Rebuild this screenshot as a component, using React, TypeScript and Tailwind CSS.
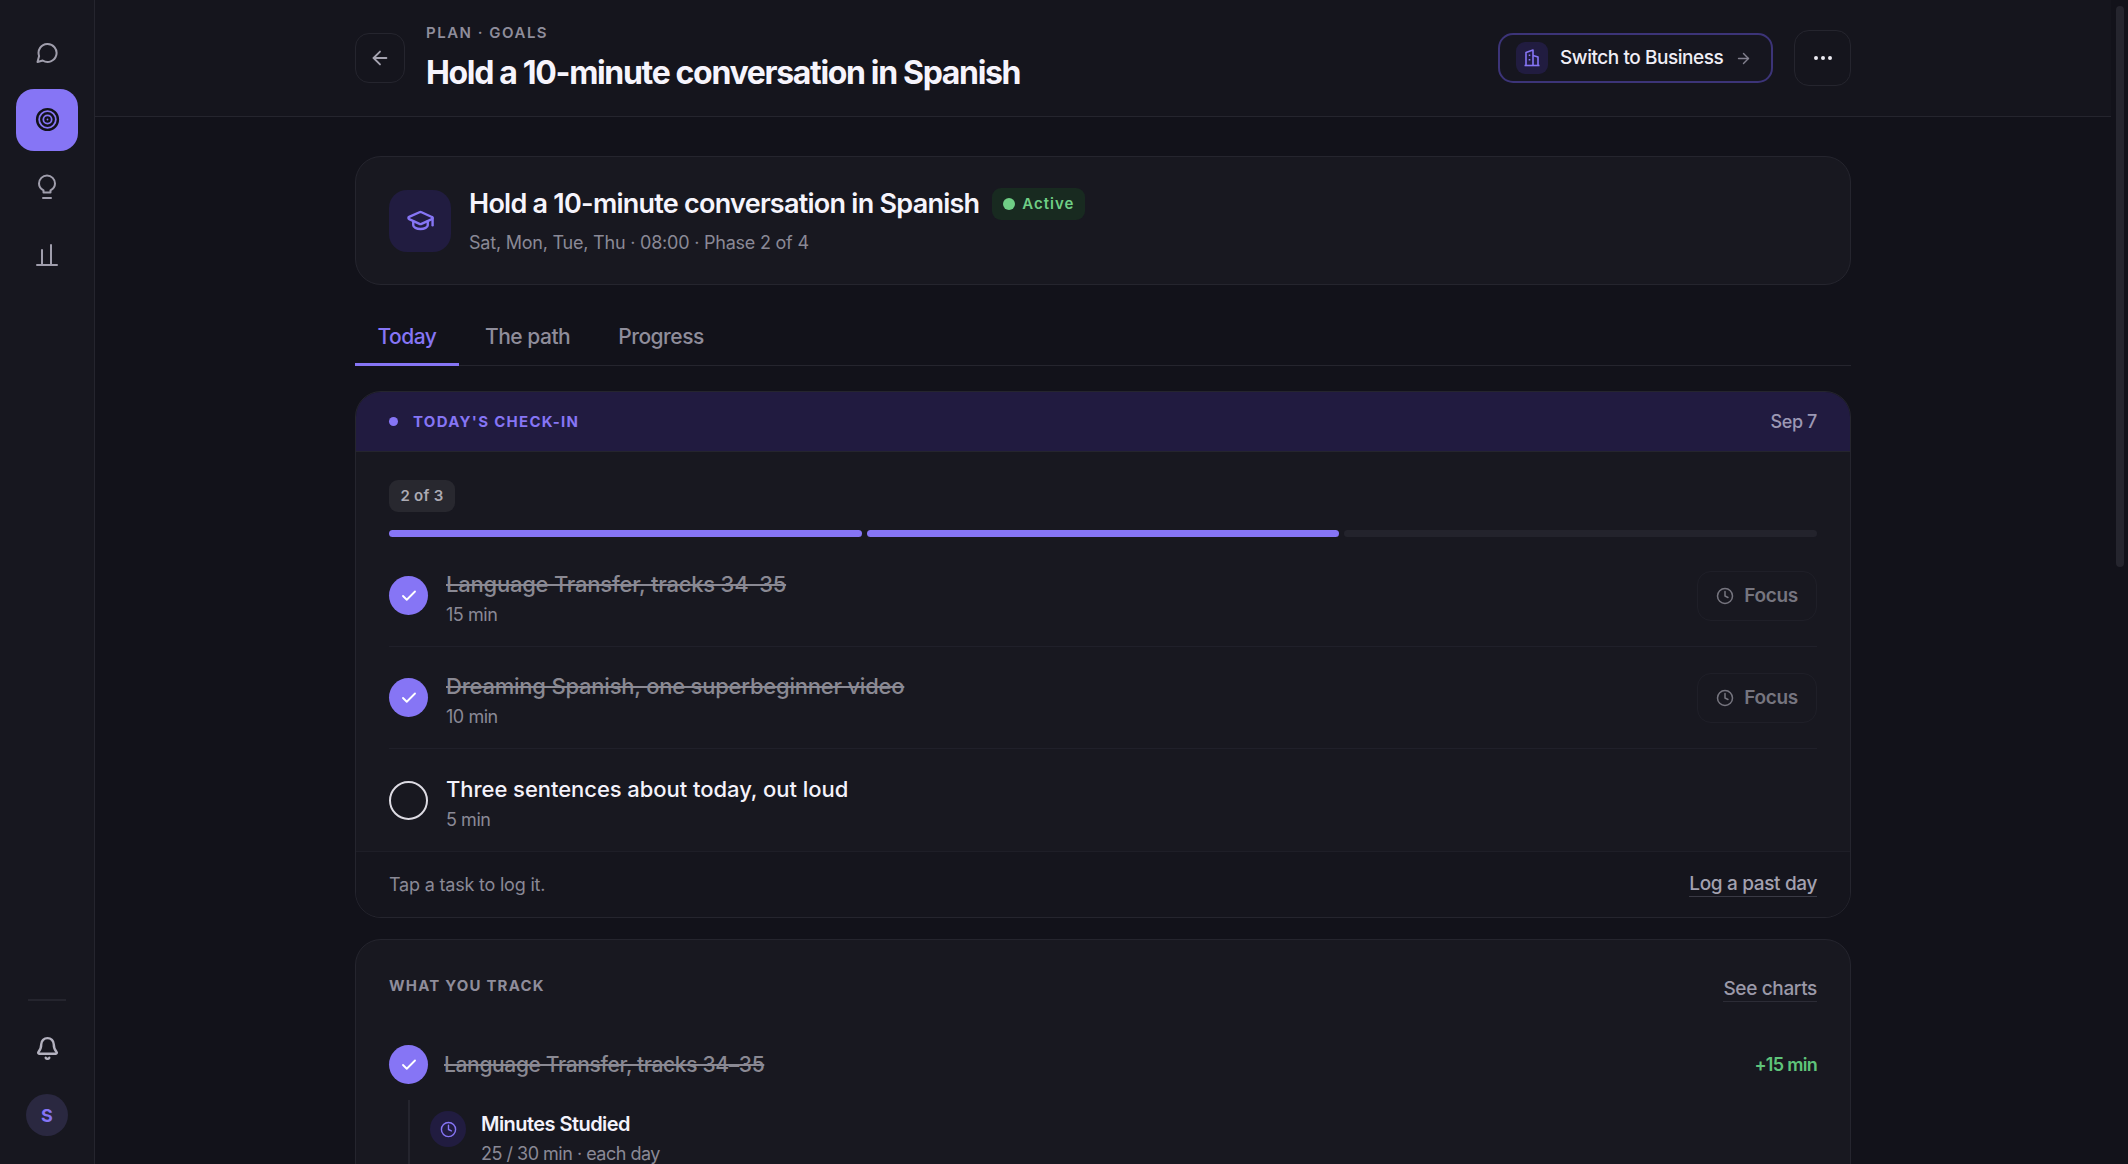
import { ArrowLeft, ArrowRight, Bell, Check, Clock, Ellipsis, GraduationCap, Target } from 'lucide-react';

const font = { fontFamily: 'Inter, "Liberation Sans", sans-serif' };

function ChatIcon() {
  return (
    <svg width="24" height="24" viewBox="0 0 24 24" fill="none" stroke="#a09eac" strokeWidth="2" strokeLinejoin="round">
      <path d="M2.5 22l1.6-6a9 9 0 1 1 3.6 4.5z" />
    </svg>
  );
}

function BulbIcon() {
  return (
    <svg width="24" height="26" viewBox="0 0 24 26" fill="none" stroke="#a09eac" strokeWidth="2" strokeLinecap="round" strokeLinejoin="round">
      <path d="M8.5 18.5v-2.2C5.8 14.9 4 12.4 4 9.5a8 8 0 0 1 16 0c0 2.9-1.8 5.4-4.5 6.8v2.2z" />
      <path d="M8 24h8" />
    </svg>
  );
}

function ChartIcon() {
  return (
    <svg width="24" height="24" viewBox="0 0 24 24" fill="none" stroke="#a09eac" strokeWidth="2" strokeLinecap="round">
      <path d="M2 22h20" />
      <path d="M7 22V7" />
      <path d="M16 22V2" />
    </svg>
  );
}

function BuildingIcon() {
  return (
    <svg width="18" height="18" viewBox="0 0 18 18" fill="none" stroke="#8675f5" strokeWidth="1.6" strokeLinejoin="round">
      <path d="M3 16.5V3.5L10 1v15.5" />
      <path d="M10 6.5l5 1.5v8.5" />
      <path d="M1.5 16.5h15" />
      <path d="M6.5 5.5V7M6.5 10v1.5" />
    </svg>
  );
}

function RoundCheck() {
  return (
    <div className="w-[39px] h-[39px] rounded-full bg-[#8675f5] flex items-center justify-center shrink-0">
      <Check size={18} strokeWidth={2.5} className="text-white" />
    </div>
  );
}

function FocusButton() {
  return (
    <button className="mt-[1px] w-[120px] h-[50px] rounded-[14px] border border-[#1f1f28] flex items-center justify-center gap-[10px] text-[#76757f] text-[19px] font-semibold tracking-[-0.35px]">
      <Clock size={18} />
      Focus
    </button>
  );
}

function TaskRow({ title, mins, done, last }: { title: string; mins: string; done?: boolean; last?: boolean }) {
  return (
    <div className={`h-[102px] flex items-center ${last ? '' : 'border-b border-[#20202a]'}`}>
      {done ? <RoundCheck /> : <div className="w-[39px] h-[39px] rounded-full border-2 border-[#dddbe3] shrink-0" />}
      <div className="ml-[18px] flex-1 pt-[6px]">
        <div className={`text-[22px] leading-[30px] font-medium ${done ? 'tracking-[-0.22px] line-through text-[#8a8993]' : 'tracking-[-0.05px] text-[#f4f2fb]'}`}>{title}</div>
        <div className="text-[18px] leading-[26px] mt-[3px] text-[#8a8996] tracking-[-0.45px]">{mins}</div>
      </div>
      {done && <FocusButton />}
    </div>
  );
}

export default function App() {
  return (
    <div className="relative h-screen w-full flex overflow-hidden bg-[#12121a]" style={font}>
      <aside className="w-[95px] shrink-0 h-full bg-[#17171f] border-r border-[#25252e] flex flex-col items-center pt-[21px] pb-[28px]">
        <div className="flex flex-col items-center gap-[5.5px]">
          <div className="w-[62px] h-[62px] flex items-center justify-center"><ChatIcon /></div>
          <div className="w-[62px] h-[62px] flex items-center justify-center rounded-[18px] bg-[#8675f5] text-[#12121a]"><Target size={25} strokeWidth={2.3} /></div>
          <div className="w-[62px] h-[62px] flex items-center justify-center"><BulbIcon /></div>
          <div className="w-[62px] h-[62px] flex items-center justify-center"><ChartIcon /></div>
        </div>
        <div className="mt-auto w-[38px] border-t-2 border-[#25252e]" />
        <div className="mt-[27px] h-[40px] flex items-center justify-center text-[#b4b2bf]"><Bell size={25} strokeWidth={2.3} /></div>
        <div className="mt-[26px] w-[42px] h-[42px] rounded-full bg-[#2a2840] flex items-center justify-center text-[#8675f5] text-[18px] font-bold">S</div>
      </aside>

      <main className="flex-1 min-w-0 pr-[17px] h-full overflow-hidden">
        <header className="h-[117px] bg-[#15151d] border-b border-[#25252e]">
          <div className="w-[1496px] mx-auto h-full flex items-start">
            <button className="mt-[33px] w-[50px] h-[50px] rounded-[14px] border border-[#25252e] flex items-center justify-center text-[#a5a3b0]">
              <ArrowLeft size={22} />
            </button>
            <div className="ml-[21px] pt-[23px]">
              <div className="text-[15px] leading-[20px] font-semibold tracking-[1.5px] text-[#8f8d9b]">PLAN · GOALS</div>
              <h1 className="mt-[10px] text-[32px] leading-[40px] font-bold tracking-[-1.33px] text-[#f6f4fc]">Hold a 10-minute conversation in Spanish</h1>
            </div>
            <button className="ml-auto mt-[33px] w-[275px] h-[50px] rounded-[15px] border-2 border-[#3c3478] bg-[#16161f] flex items-center pl-[16px] pr-[19px]">
              <span className="w-[32px] h-[32px] rounded-[9px] bg-[#211c40] flex items-center justify-center"><BuildingIcon /></span>
              <span className="ml-[12px] text-[19px] font-medium tracking-[-0.45px] text-[#f0eef6]">Switch to Business</span>
              <ArrowRight size={17} className="ml-auto text-[#82808e]" />
            </button>
            <button className="ml-[21px] mt-[30px] w-[57px] h-[56px] rounded-[15px] border border-[#25252e] flex items-center justify-center text-[#ecebf2]">
              <Ellipsis size={24} strokeWidth={2} />
            </button>
          </div>
        </header>

        <div className="w-[1496px] mx-auto">
          <section className="mt-[39px] h-[129px] rounded-[26px] bg-[#181820] border border-[#25252e] flex items-center pl-[33px]">
            <div className="w-[62px] h-[62px] rounded-[18px] bg-[#211c40] flex items-center justify-center text-[#8675f5]">
              <GraduationCap size={29} strokeWidth={2} />
            </div>
            <div className="ml-[18px] pt-[3px]">
              <div className="flex items-center gap-[13px]">
                <div className="text-[27px] leading-[32px] font-semibold tracking-[-0.75px] text-[#f6f4fc]">Hold a 10-minute conversation in Spanish</div>
                <span className="h-[32px] w-[93px] pl-[11px] rounded-[9px] bg-[#182a20] flex items-center gap-[7px] text-[#6fcf85] text-[15px] font-semibold tracking-[1px]">
                  <span className="w-[12px] h-[12px] rounded-full bg-[#6fcf85]" />
                  Active
                </span>
              </div>
              <div className="mt-[10px] text-[18px] leading-[26px] text-[#8a8996] tracking-[-0.22px]">Sat, Mon, Tue, Thu · 08:00 · Phase 2 of 4</div>
            </div>
          </section>

          <nav className="mt-[26px] h-[55px] border-b border-[#25252e] flex items-stretch gap-[4px] text-[21px] font-medium tracking-[-0.5px]">
            <div className="w-[104px] flex items-center justify-center text-[#8675f5] border-b-[3px] border-[#8675f5] -mb-px">Today</div>
            <div className="px-[22px] flex items-center text-[#8f8d9b] border-b-[3px] border-transparent -mb-px">The path</div>
            <div className="px-[22px] flex items-center text-[#8f8d9b] border-b-[3px] border-transparent -mb-px">Progress</div>
          </nav>

          <section className="mt-[25px] h-[527px] rounded-[26px] bg-[#181820] border border-[#25252e] overflow-hidden">
            <div className="h-[60px] bg-[#211b40] border-b border-[#25252e] flex items-center justify-between px-[33px]">
              <div className="flex items-center gap-[15px]">
                <span className="w-[9px] h-[9px] rounded-full bg-[#8675f5]" />
                <span className="mt-[1px] text-[15px] font-bold tracking-[1.3px] text-[#8675f5]">TODAY'S CHECK-IN</span>
              </div>
              <span className="text-[18px] font-medium tracking-[-0.4px] text-[#9c98b4]">Sep 7</span>
            </div>
            <div className="px-[33px] pt-[28px]">
              <span className="inline-flex h-[32px] w-[66px] items-center justify-center rounded-[9px] bg-[#28282f] text-[15px] font-semibold tracking-[0.3px] text-[#acabb4]">2 of 3</span>
              <div className="mt-[18px] flex gap-[5px]">
                <div className="flex-1 h-[7px] rounded-full bg-[#8675f5]" />
                <div className="flex-1 h-[7px] rounded-full bg-[#8675f5]" />
                <div className="flex-1 h-[7px] rounded-full bg-[#23232c]" />
              </div>
              <div className="mt-[8px]">
                <TaskRow title="Language Transfer, tracks 34–35" mins="15 min" done />
                <TaskRow title="Dreaming Spanish, one superbeginner video" mins="10 min" done />
                <TaskRow title="Three sentences about today, out loud" mins="5 min" last />
              </div>
            </div>
            <div className="h-[66px] bg-[#15151d] border-t border-[#1e1e27] flex items-center justify-between px-[33px]">
              <span className="text-[18px] tracking-[-0.2px] text-[#8a8996]">Tap a task to log it.</span>
              <span className="text-[19px] font-medium tracking-[-0.35px] text-[#a3a1b0] border-b border-[#3a3a45] leading-[24px]">Log a past day</span>
            </div>
          </section>

          <section className="mt-[21px] rounded-[26px] bg-[#181820] border border-[#25252e] px-[33px] pt-[36px] pb-[40px]">
            <div className="flex items-center justify-between h-[26px]">
              <span className="mb-[5px] text-[15px] font-bold tracking-[1.2px] text-[#8f8d9b]">WHAT YOU TRACK</span>
              <span className="text-[19px] font-medium tracking-[-0.35px] text-[#9b99a8] border-b border-[#2c2c36] leading-[24px]">See charts</span>
            </div>
            <div className="mt-[43px] flex items-center">
              <RoundCheck />
              <span className="ml-[16px] text-[21px] font-medium tracking-[-0.35px] line-through text-[#8a8993]">Language Transfer, tracks 34–35</span>
              <span className="ml-auto text-[18px] font-semibold tracking-[-0.7px] text-[#5fc47a]">+15 min</span>
            </div>
            <div className="ml-[19px] mt-[16px] border-l-2 border-[#25252e] pl-[20px] pt-[10px] flex items-start gap-[15px]">
              <div className="w-[36px] h-[36px] mt-[1px] rounded-full bg-[#211c40] flex items-center justify-center text-[#8675f5]"><Clock size={17} /></div>
              <div>
                <div className="text-[20px] leading-[28px] font-semibold tracking-[-0.55px] text-[#f4f2fb]">Minutes Studied</div>
                <div className="mt-[3px] text-[18px] leading-[26px] tracking-[-0.5px] text-[#8a8996]">25 / 30 min · each day</div>
              </div>
            </div>
          </section>
        </div>
      </main>

      <div className="absolute right-[4px] top-[6px] w-[8px] h-[561px] rounded-full bg-[#25252e]" />
    </div>
  );
}
